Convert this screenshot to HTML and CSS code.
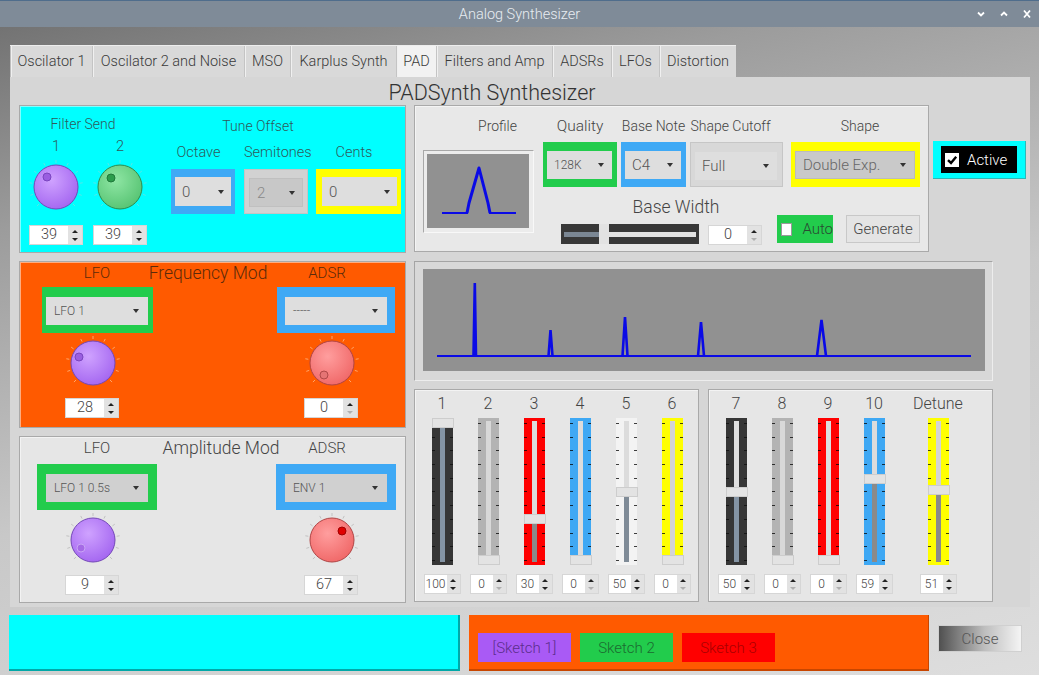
FILE: index.html
```html
<!DOCTYPE html>
<html>
<head>
<meta charset="utf-8">
<title>Analog Synthesizer</title>
<link rel="stylesheet" href="styles.css">
</head>
<body>
<div class="titlebar">
  <span class="title">Analog Synthesizer</span>
  <div class="winctl">
    <svg viewBox="0 0 12 10"><path d="M3 3.5L6 6.5L9 3.5"/></svg>
    <svg viewBox="0 0 12 10"><path d="M3 6.5L6 3.5L9 6.5"/></svg>
    <svg viewBox="0 0 12 10"><path d="M3 1.5L9 8.5M9 1.5L3 8.5"/></svg>
  </div>
</div>
<div class="winbody">
  <div class="tabs">
    <div class="tab t1">Oscilator 1</div>
    <div class="tab t2">Oscilator 2 and Noise</div>
    <div class="tab t3">MSO</div>
    <div class="tab t4">Karplus Synth</div>
    <div class="tab t5 sel">PAD</div>
    <div class="tab t6">Filters and Amp</div>
    <div class="tab t7">ADSRs</div>
    <div class="tab t8">LFOs</div>
    <div class="tab t9">Distortion</div>
  </div>
  <div class="pane">
    <h1 class="heading">PADSynth Synthesizer</h1>
    <div class="main">
      <div class="leftcol">
        <section class="panel send">
          <div class="fs">
            <div class="fs-lbl">Filter Send</div>
            <div class="fs-cols">
              <div class="fs-col">
                <div class="num">1</div>
                <svg class="knob" viewBox="0 0 60 60">
                  <defs>
                    <radialGradient id="gp" cx="40%" cy="35%" r="70%"><stop offset="0" stop-color="#cfa2ff"/><stop offset="1" stop-color="#a365f0"/></radialGradient>
                    <radialGradient id="gg" cx="40%" cy="35%" r="70%"><stop offset="0" stop-color="#8fe6a4"/><stop offset="1" stop-color="#56c372"/></radialGradient>
                    <radialGradient id="gr" cx="40%" cy="35%" r="70%"><stop offset="0" stop-color="#ff9e9e"/><stop offset="1" stop-color="#f06767"/></radialGradient>
                  </defs>
                  <path class="ticks" d="M13.03 46.97L10.91 49.09M7.17 37.42L4.32 38.34M6.3 26.25L3.33 25.78M10.58 15.89L8.16 14.13M19.1 8.62L17.74 5.94M30 6L30 3M40.9 8.62L42.26 5.94M49.42 15.89L51.84 14.13M53.7 26.25L56.67 25.78M52.83 37.42L55.68 38.34M46.97 46.97L49.09 49.09"/>
                  <circle cx="30" cy="30" r="22" fill="url(#gp)" stroke="#7448b8"/>
                  <circle cx="21" cy="20" r="4" fill="#9a5ee0" stroke="#7a45c0"/>
                </svg>
                <div class="spin big"><span class="sv">39</span><span class="sa"><i class="u"></i><i class="d"></i></span></div>
              </div>
              <div class="fs-col">
                <div class="num">2</div>
                <svg class="knob" viewBox="0 0 60 60">
                  <path class="ticks" d="M13.03 46.97L10.91 49.09M7.17 37.42L4.32 38.34M6.3 26.25L3.33 25.78M10.58 15.89L8.16 14.13M19.1 8.62L17.74 5.94M30 6L30 3M40.9 8.62L42.26 5.94M49.42 15.89L51.84 14.13M53.7 26.25L56.67 25.78M52.83 37.42L55.68 38.34M46.97 46.97L49.09 49.09"/>
                  <circle cx="30" cy="30" r="22" fill="url(#gg)" stroke="#2f8a4b"/>
                  <circle cx="21" cy="21" r="4" fill="#2c9c4c" stroke="#1f7a3a"/>
                </svg>
                <div class="spin big"><span class="sv">39</span><span class="sa"><i class="u"></i><i class="d"></i></span></div>
              </div>
            </div>
          </div>
          <div class="tune">
            <div class="tune-lbl">Tune Offset</div>
            <div class="tune-cols">
              <div class="tcol oct">
                <div class="tl">Octave</div>
                <div class="frame fr-blue"><div class="combo"><span>0</span></div></div>
              </div>
              <div class="tcol semi">
                <div class="tl">Semitones</div>
                <div class="frame fr-grey"><div class="combo dis"><span>2</span></div></div>
              </div>
              <div class="tcol cents">
                <div class="tl">Cents</div>
                <div class="frame fr-yellow"><div class="combo"><span>0</span></div></div>
              </div>
            </div>
          </div>
        </section>

        <section class="panel mod freq">
          <div class="mod-head">
            <div class="mh-side">LFO</div>
            <div class="mh-title">Frequency Mod</div>
            <div class="mh-side">ADSR</div>
          </div>
          <div class="mod-body">
            <div class="mcol">
              <div class="frame mframe fr-green w111"><div class="combo mc"><span>LFO 1</span></div></div>
              <svg class="knob" viewBox="0 0 60 60">
                <path class="ticks" d="M13.03 46.97L10.91 49.09M7.17 37.42L4.32 38.34M6.3 26.25L3.33 25.78M10.58 15.89L8.16 14.13M19.1 8.62L17.74 5.94M30 6L30 3M40.9 8.62L42.26 5.94M49.42 15.89L51.84 14.13M53.7 26.25L56.67 25.78M52.83 37.42L55.68 38.34M46.97 46.97L49.09 49.09"/>
                <circle cx="30" cy="30" r="22" fill="url(#gp)" stroke="#7448b8"/>
                <circle cx="16" cy="24" r="4" fill="#9a5ee0" stroke="#7a45c0"/>
              </svg>
              <div class="spin big"><span class="sv">28</span><span class="sa"><i class="u"></i><i class="d"></i></span></div>
            </div>
            <div class="mcol">
              <div class="frame mframe fr-blue w118"><div class="combo mc"><span>-----</span></div></div>
              <svg class="knob" viewBox="0 0 60 60">
                <path class="ticks" d="M13.03 46.97L10.91 49.09M7.17 37.42L4.32 38.34M6.3 26.25L3.33 25.78M10.58 15.89L8.16 14.13M19.1 8.62L17.74 5.94M30 6L30 3M40.9 8.62L42.26 5.94M49.42 15.89L51.84 14.13M53.7 26.25L56.67 25.78M52.83 37.42L55.68 38.34M46.97 46.97L49.09 49.09"/>
                <circle cx="30" cy="30" r="22" fill="url(#gr)" stroke="#b04444"/>
                <circle cx="22" cy="42" r="4" fill="#e57474" stroke="#b04848"/>
              </svg>
              <div class="spin big"><span class="sv">0</span><span class="sa"><i class="u"></i><i class="d off"></i></span></div>
            </div>
          </div>
        </section>

        <section class="panel mod amp">
          <div class="mod-head">
            <div class="mh-side">LFO</div>
            <div class="mh-title">Amplitude Mod</div>
            <div class="mh-side">ADSR</div>
          </div>
          <div class="mod-body">
            <div class="mcol">
              <div class="frame mframe fr-green w120"><div class="combo mc dk"><span>LFO 1 0.5s</span></div></div>
              <svg class="knob" viewBox="0 0 60 60">
                <path class="ticks" d="M13.03 46.97L10.91 49.09M7.17 37.42L4.32 38.34M6.3 26.25L3.33 25.78M10.58 15.89L8.16 14.13M19.1 8.62L17.74 5.94M30 6L30 3M40.9 8.62L42.26 5.94M49.42 15.89L51.84 14.13M53.7 26.25L56.67 25.78M52.83 37.42L55.68 38.34M46.97 46.97L49.09 49.09"/>
                <circle cx="30" cy="30" r="22" fill="url(#gp)" stroke="#7448b8"/>
                <circle cx="18" cy="38" r="4" fill="#a56ae6" stroke="#c9a5f5"/>
              </svg>
              <div class="spin big"><span class="sv">9</span><span class="sa"><i class="u"></i><i class="d"></i></span></div>
            </div>
            <div class="mcol">
              <div class="frame mframe fr-blue w120"><div class="combo mc dk"><span>ENV 1</span></div></div>
              <svg class="knob" viewBox="0 0 60 60">
                <path class="ticks" d="M13.03 46.97L10.91 49.09M7.17 37.42L4.32 38.34M6.3 26.25L3.33 25.78M10.58 15.89L8.16 14.13M19.1 8.62L17.74 5.94M30 6L30 3M40.9 8.62L42.26 5.94M49.42 15.89L51.84 14.13M53.7 26.25L56.67 25.78M52.83 37.42L55.68 38.34M46.97 46.97L49.09 49.09"/>
                <circle cx="30" cy="30" r="22" fill="url(#gr)" stroke="#b04444"/>
                <circle cx="40" cy="21" r="4" fill="#e00000" stroke="#a00000"/>
              </svg>
              <div class="spin big"><span class="sv">67</span><span class="sa"><i class="u"></i><i class="d"></i></span></div>
            </div>
          </div>
        </section>
      </div>

      <div class="rightcol">
        <div class="toprow">
          <section class="panel profile">
            <div class="prof-col">
              <div class="lbl prof-lbl">Profile</div>
              <div class="graph">
                <svg width="102" height="74" viewBox="0 0 102 74">
                  <rect width="102" height="74" fill="#919191"/>
                  <polyline points="15,59 41,59" class="bl"/>
                  <polyline points="62,59 89,59" class="bl"/>
                  <polyline points="40,59 42,49 52,14 61,49 63,59" class="pk"/>
                </svg>
              </div>
            </div>
            <div class="ctrl-area">
              <div class="combo-row">
                <div class="ccol q">
                  <div class="lbl big">Quality</div>
                  <div class="frame pframe fr-green"><div class="combo small"><span>128K</span></div></div>
                </div>
                <div class="ccol bn">
                  <div class="lbl">Base Note</div>
                  <div class="frame pframe fr-blue"><div class="combo"><span>C4</span></div></div>
                </div>
                <div class="ccol sc">
                  <div class="lbl sc-lbl">Shape Cutoff</div>
                  <div class="frame pframe fr-grey2"><div class="combo"><span>Full</span></div></div>
                </div>
                <div class="ccol sh">
                  <div class="lbl sh-lbl">Shape</div>
                  <div class="frame pframe fr-yellow"><div class="combo shape"><span>Double Exp.</span></div></div>
                </div>
              </div>
              <div class="bw-row">
                <div class="bw">
                  <div class="bw-lbl">Base Width</div>
                  <div class="hslider"><i></i></div>
                </div>
                <div class="spin big bw-spin"><span class="sv">0</span><span class="sa"><i class="u"></i><i class="d off"></i></span></div>
                <div class="auto"><span class="cbx"></span><span>Auto</span></div>
                <div class="gen">Generate</div>
              </div>
            </div>
          </section>
          <div class="active">
            <div class="active-in">
              <span class="acb"><svg viewBox="0 0 14 14"><path d="M3 7.2L6 10L11.2 3.8"/></svg></span>
              <span class="atxt">Active</span>
            </div>
          </div>
        </div>

        <section class="spectrum">
          <svg width="562" height="102" viewBox="0 0 562 102">
            <rect width="562" height="102" fill="#919191"/>
            <line x1="14" y1="87" x2="548" y2="87" class="bl"/>
            <polyline points="50.5,87 51.8,14 53,87" class="sp"/>
            <polyline points="125.5,87 127.5,61 129.5,87" class="sp"/>
            <polyline points="199.5,87 202,48 204.5,87" class="sp"/>
            <polyline points="275,87 278,53 281,87" class="sp"/>
            <polyline points="394,87 398.5,51 403,87" class="sp"/>
          </svg>
        </section>

        <div class="sliderrow">
          <section class="panel sliders">
            <div class="scol"><div class="slab">1</div><div class="vs s-dark" style="--v:100"><i class="h"></i></div><div class="spin sm"><span class="sv">100</span><span class="sa"><i class="u"></i><i class="d"></i></span></div></div>
            <div class="scol"><div class="slab">2</div><div class="vs s-grey" style="--v:0"><i class="h"></i></div><div class="spin sm"><span class="sv">0</span><span class="sa"><i class="u"></i><i class="d off"></i></span></div></div>
            <div class="scol"><div class="slab">3</div><div class="vs s-red" style="--v:30"><i class="h"></i></div><div class="spin sm"><span class="sv">30</span><span class="sa"><i class="u"></i><i class="d"></i></span></div></div>
            <div class="scol"><div class="slab">4</div><div class="vs s-blue" style="--v:0"><i class="h"></i></div><div class="spin sm"><span class="sv">0</span><span class="sa"><i class="u"></i><i class="d off"></i></span></div></div>
            <div class="scol"><div class="slab">5</div><div class="vs s-white" style="--v:50"><i class="h"></i></div><div class="spin sm"><span class="sv">50</span><span class="sa"><i class="u"></i><i class="d"></i></span></div></div>
            <div class="scol"><div class="slab">6</div><div class="vs s-yellow" style="--v:0"><i class="h"></i></div><div class="spin sm"><span class="sv">0</span><span class="sa"><i class="u"></i><i class="d off"></i></span></div></div>
          </section>
          <section class="panel sliders">
            <div class="scol"><div class="slab">7</div><div class="vs s-dark" style="--v:50"><i class="h"></i></div><div class="spin sm"><span class="sv">50</span><span class="sa"><i class="u"></i><i class="d"></i></span></div></div>
            <div class="scol"><div class="slab">8</div><div class="vs s-grey" style="--v:0"><i class="h"></i></div><div class="spin sm"><span class="sv">0</span><span class="sa"><i class="u"></i><i class="d off"></i></span></div></div>
            <div class="scol"><div class="slab">9</div><div class="vs s-red" style="--v:0"><i class="h"></i></div><div class="spin sm"><span class="sv">0</span><span class="sa"><i class="u"></i><i class="d off"></i></span></div></div>
            <div class="scol"><div class="slab">10</div><div class="vs s-blue" style="--v:59"><i class="h"></i></div><div class="spin sm"><span class="sv">59</span><span class="sa"><i class="u"></i><i class="d"></i></span></div></div>
            <div class="scol wide"><div class="slab">Detune</div><div class="vs s-yellow" style="--v:51"><i class="h"></i></div><div class="spin sm"><span class="sv">51</span><span class="sa"><i class="u"></i><i class="d"></i></span></div></div>
          </section>
        </div>
      </div>
    </div>
  </div>
  <div class="bottom">
    <div class="b-cyan"></div>
    <div class="b-orange">
      <div class="skb sk1">[Sketch 1]</div>
      <div class="skb sk2">Sketch 2</div>
      <div class="skb sk3">Sketch 3</div>
    </div>
    <div class="close">Close</div>
  </div>
</div>
</body>
</html>
```

FILE: styles.css
```css
* { box-sizing: border-box; margin: 0; padding: 0; }
html, body { width: 1039px; height: 675px; overflow: hidden; }
body { font-family: Roboto, "Liberation Sans", sans-serif; font-weight: 300; color: #444; background: #d0d0d0; }

/* title bar */
.titlebar {
  height: 27px; background: #7f8b98; border-top: 1px solid #4f6d8c;
  display: grid; grid-template-columns: 1fr auto 1fr; align-items: center;
}
.title { grid-column: 2; color: #e8edf2; font-size: 14.5px; }
.winctl { grid-column: 3; justify-self: end; display: flex; gap: 11px; padding-right: 6px; }
.winctl svg { width: 12px; height: 10px; fill: none; stroke: #fff; stroke-width: 1.8; }

/* window body */
.winbody {
  height: 648px; padding-left: 10px; padding-top: 18px;
  background: linear-gradient(165deg, #737373 0%, #9c9c9c 22%, #c8c8c8 55%, #dedede 100%);
}
.tabs { display: flex; height: 32px; width: 726px; background: #d9d9d9; border-top: 1px solid #ededed; }
.tab {
  font-size: 14.5px; color: #3a3a3a; display: flex; align-items: center; justify-content: center;
  border-left: 1px solid #c4c4c4; box-shadow: inset 1px 0 #f0f0f0;
}
.tab:first-child { border-left: 1px solid #bdbdbd; }
.tab.sel { background: #f2f2f2; }
.t1 { width: 82px; } .t2 { width: 152px; } .t3 { width: 46px; } .t4 { width: 106px; }
.t5 { width: 40px; } .t6 { width: 116px; } .t7 { width: 59px; } .t8 { width: 48px; } .t9 { width: 77px; }

.pane { width: 1020px; height: 530px; background: #d6d6d6; }
.heading {
  font-size: 21.5px; font-weight: 300; line-height: 24px; padding-top: 4px; padding-right: 56px;
  text-align: center; color: #333; height: 28px;
}
.main { display: flex; padding-left: 9px; gap: 8px; }
.leftcol { width: 387px; display: flex; flex-direction: column; gap: 8px; }
.rightcol { width: 613px; display: flex; flex-direction: column; }

.panel { border: 1px solid #a9a9a9; box-shadow: inset 1px 1px 0 rgba(255,255,255,.5); }

/* knobs */
.knob { width: 60px; height: 60px; display: block; }
.ticks { fill: none; stroke-width: 1; }
.send .ticks { stroke: #55e8e8; }
.freq .ticks { stroke: #ffa66a; }
.amp .ticks { stroke: #c2c2c2; }

/* spin boxes */
.spin { display: flex; background: #fff; border: 1px solid #d6d6d6; }
.spin .sv { flex: 1; text-align: center; color: #444; }
.spin .sa {
  background: #e2e2e2; display: flex; flex-direction: column; align-items: center;
  justify-content: center; gap: 5px;
}
.spin .u { border-left: 3px solid transparent; border-right: 3px solid transparent; border-bottom: 3px solid #222; }
.spin .d { border-left: 3px solid transparent; border-right: 3px solid transparent; border-top: 3px solid #222; }
.spin .d.off { border-top-color: #b0b0b0; }
.spin.big { width: 54px; height: 20px; }
.spin.big .sv { font-size: 14.5px; line-height: 18px; }
.spin.big .sa { width: 14px; }
.spin.sm { width: 37px; height: 20px; }
.spin.sm .sv { font-size: 12px; line-height: 18px; }
.spin.sm .sa { width: 13px; }

/* combos and frames */
.frame { display: flex; justify-content: center; }
.fr-blue { background: #3fa9f5; }
.fr-green { background: #22cc4c; }
.fr-yellow { background: #ffff00; }
.fr-grey { background: #d2d2d2; border: 1px solid #c4c4c4; }
.fr-grey2 { background: #d8d8d8; border: 1px solid #c6c6c6; }
.combo {
  flex: 1; height: 29px; background: #dedede; color: #555; font-size: 15px;
  display: flex; align-items: center; justify-content: space-between; padding: 0 7px 0 7px;
}
.combo::after {
  content: ""; border-left: 3px solid transparent; border-right: 3px solid transparent;
  border-top: 4px solid #333;
}
.combo.dis { background: #c8c8c8; color: #888; border: 1px solid #c0c0c0; }
.combo.small { font-size: 12px; }
.combo.shape { background: #c9c9c9; border: 1px solid #bcbcbc; color: #666; }

/* send panel */
.send { background: #00ffff; display: flex; padding-left: 4px; height: 148px; color: #2f5a5a; font-size: 14px; }
.fs { width: 128px; }
.fs-lbl { padding-top: 8px; line-height: 20px; text-align: center; padding-right: 10px; }
.fs-cols { display: flex; }
.fs-col { width: 64px; display: flex; flex-direction: column; align-items: center; }
.num { line-height: 20px; margin-top: 3px; font-size: 14.5px; }
.fs-col .spin { margin-top: 8px; }
.tune { margin-left: 19px; width: 230px; }
.tune-lbl { padding-top: 10px; line-height: 20px; text-align: center; padding-right: 56px; }
.tune-cols { display: flex; }
.tcol { display: flex; flex-direction: column; }
.tl { margin-top: 7px; line-height: 20px; text-align: center; padding-right: 9px; font-size: 14.5px; }
.tcol .frame { margin-top: 6px; height: 45px; padding: 8px 4px 7px; }
.oct { width: 64px; }
.semi { width: 64px; margin-left: 9px; }
.cents { width: 85px; margin-left: 8px; }
.cents .frame { padding-left: 6px; }

/* modulation panels */
.mod { height: 167px; }
.freq { background: #ff5a00; color: #5c2a0a; }
.amp { background: #e6e6e6; color: #444; }
.mod-head { display: flex; padding-left: 47px; padding-top: 1px; line-height: 20px; }
.mh-side { width: 60px; text-align: center; font-size: 15px; }
.mh-title { width: 140px; text-align: center; font-size: 17.5px; }
.freq .mh-title { margin-left: 11px; margin-right: 19px; }
.amp .mh-title { margin-left: 24px; margin-right: 6px; }
.mod-body { display: flex; padding-left: 17px; gap: 119px; }
.freq .mod-body { margin-top: 4px; }
.amp .mod-body { margin-top: 6px; }
.mcol { width: 120px; display: flex; flex-direction: column; align-items: center; }
.mframe { height: 46px; padding-top: 10px; padding-bottom: 8px; }
.w111 { width: 111px; } .w118 { width: 118px; } .w120 { width: 120px; }
.combo.mc { flex: 0 0 102px; height: 28px; font-size: 12px; padding: 0 9px 0 8px; }
.combo.mc.dk { background: #d0d0d0; }
.mcol .knob { margin-right: 8px; }
.mcol .spin { margin-top: 5px; margin-right: 10px; }

/* profile panel */
.toprow { display: flex; align-items: flex-start; }
.profile { width: 515px; height: 147px; background: #e8e8e8; display: flex; padding-left: 8px; }
.lbl { line-height: 20px; padding-top: 10px; text-align: center; font-size: 14px; color: #444; }
.lbl.big { font-size: 15.5px; }
.prof-col { width: 111px; }
.prof-lbl { padding-left: 38px; }
.graph {
  margin-top: 14px; width: 111px; height: 83px; background: #ececec;
  border: 1px solid #a8a8a8; border-right-color: #f8f8f8; border-bottom-color: #f8f8f8; padding: 3px;
}
.graph svg { display: block; }
.bl { stroke: #0a0ae6; stroke-width: 2; fill: none; }
.pk { stroke: #0a0ae6; stroke-width: 3; fill: none; stroke-linejoin: round; }
.sp { stroke: #0a0ae6; stroke-width: 2.6; fill: none; stroke-linejoin: miter; }
.ctrl-area { margin-left: 9px; }
.combo-row { display: flex; }
.ccol { display: flex; flex-direction: column; }
.pframe { margin-top: 6px; height: 45px; padding: 9px 5px 8px 4px; }
.pframe .combo { height: 28px; padding: 0 8px 0 7px; }
.q { width: 74px; }
.bn { width: 65px; margin-left: 4px; }
.sc { width: 93px; margin-left: 4px; }
.sc-lbl { padding-right: 12px; }
.sh { width: 129px; margin-left: 8px; }
.sh-lbl { padding-left: 9px; }
.bw-row { display: flex; align-items: flex-end; }
.bw { margin-left: 18px; width: 138px; }
.bw-lbl { margin-left: 4px; width: 222px; margin-top: 10px; line-height: 20px; text-align: center; font-size: 17.5px; color: #444; }
.hslider { position: relative; margin-top: 7px; width: 138px; height: 20px; background: #383838; }
.hslider::before {
  content: ""; position: absolute; left: 3px; right: 3px; top: 8px; height: 5px;
  background: linear-gradient(to right, #7b8794 38px, #e2e2e2 38px);
}
.hslider i { position: absolute; left: 38px; top: 0; width: 10px; height: 20px; background: #e2e2e2; }
.bw-spin { margin-left: 9px; margin-bottom: -1px; }
.auto {
  margin-left: 15px; margin-bottom: 1px; width: 56px; height: 28px; background: #22cc4c;
  display: flex; align-items: center; gap: 10px; padding-left: 4px; font-size: 15px; color: #2a4a33;
}
.cbx { width: 13px; height: 13px; background: #fff; border: 1px solid #9a9a9a; }
.gen {
  margin-left: 13px; margin-bottom: 1px; width: 74px; height: 28px; background: #e4e4e4;
  border: 1px solid #c8c8c8; display: flex; align-items: center; justify-content: center;
  font-size: 15px; color: #444;
}

/* active */
.active {
  margin-left: 4px; margin-top: 36px; width: 93px; height: 38px; background: #00ffff;
  border-right: 1px solid #2cb8b8; border-bottom: 1px solid #2cb8b8;
  padding: 5px 8px 5px 8px;
}
.active-in { height: 27px; background: #000; display: flex; align-items: center; padding-left: 4px; gap: 8px; }
.acb { width: 14px; height: 14px; background: #fff; display: flex; }
.acb svg { width: 14px; height: 14px; fill: none; stroke: #000; stroke-width: 2.4; }
.atxt { color: #fff; font-size: 15px; }

/* spectrum */
.spectrum {
  margin-top: 9px; width: 579px; height: 120px; background: #d8d8d8;
  border: 1px solid #a4a4a4; border-right-color: #ededed; border-bottom-color: #ededed;
  padding: 7px 7px 9px 8px;
}
.spectrum svg { display: block; }

/* sliders */
.sliderrow { display: flex; gap: 9px; margin-top: 8px; }
.sliders { width: 285px; height: 213px; background: #e6e6e6; display: flex; padding-left: 4px; }
.scol { width: 46px; display: flex; flex-direction: column; align-items: center; }
.scol.wide { width: 82px; }
.slab { margin-top: 4px; line-height: 20px; font-size: 16px; color: #444; }
.vs { position: relative; margin-top: 4px; width: 21px; height: 147px; }
.vs::before {
  content: ""; position: absolute; left: 8px; width: 5px; top: 3px; bottom: 3px;
  background: linear-gradient(to top, var(--lo, #858e98) calc(var(--v) * 1%), var(--hi, #dcdcdc) 0);
}
.vs::after {
  content: ""; position: absolute; left: 0; right: 0; top: 5px; bottom: 4px;
  background:
    repeating-linear-gradient(to bottom, var(--tk, rgba(0,0,0,.75)) 0 1px, transparent 1px 13.7px) left top / 3px 100% no-repeat,
    repeating-linear-gradient(to bottom, var(--tk, rgba(0,0,0,.75)) 0 1px, transparent 1px 13.7px) right top / 3px 100% no-repeat;
}
.vs .h {
  position: absolute; z-index: 1; left: 0; width: 22px; height: 10px;
  top: calc((100 - var(--v)) * 1.37px); background: #e3e3e3; border: 1px solid #cdcdcd;
}
.s-dark { background: #363636; --lo: #8494a4; --hi: #e0e0e0; --tk: rgba(0,0,0,.6); }
.s-grey { background: #b3b3b3; --hi: #d8d8d8; }
.s-red { background: #ff0000; --lo: #8a8a8a; }
.s-blue { background: #3ea8f4; --lo: #8a8a8a; }
.s-white { background: #f3f3f3; --lo: #7f8b97; }
.s-yellow { background: #ffff00; --lo: #8a8a8a; --hi: #d4d4d4; }
.scol .spin { margin-top: 9px; }

/* bottom */
.bottom { display: flex; align-items: flex-start; margin-top: 8px; margin-left: -1px; height: 56px; }
.b-cyan { width: 451px; height: 56px; background: #00ffff; border-right: 2px solid #00a8a8; border-bottom: 2px solid #00a8a8; }
.b-orange {
  width: 460px; height: 56px; margin-left: 9px; background: #ff5a00;
  border-right: 1px solid #c84600; border-bottom: 2px solid #c84600;
  display: flex; gap: 9px; padding: 18px 0 0 9px; align-items: flex-start;
}
.skb { width: 93px; height: 29px; font-size: 15px; display: flex; align-items: center; justify-content: center; }
.sk1 { background: #a95af5; color: #5b2d8c; }
.sk2 { background: #22cc4c; color: #1c6a30; }
.sk3 { background: #ff0000; color: #a80000; }
.close {
  margin-left: 9px; margin-top: 10px; width: 84px; height: 27px;
  background: linear-gradient(to right, #505050, #bdbdbd 55%, #f4f4f4);
  border: 1px solid #d0d0d0; color: #555; font-size: 15px;
  display: flex; align-items: center; justify-content: center;
}
```
